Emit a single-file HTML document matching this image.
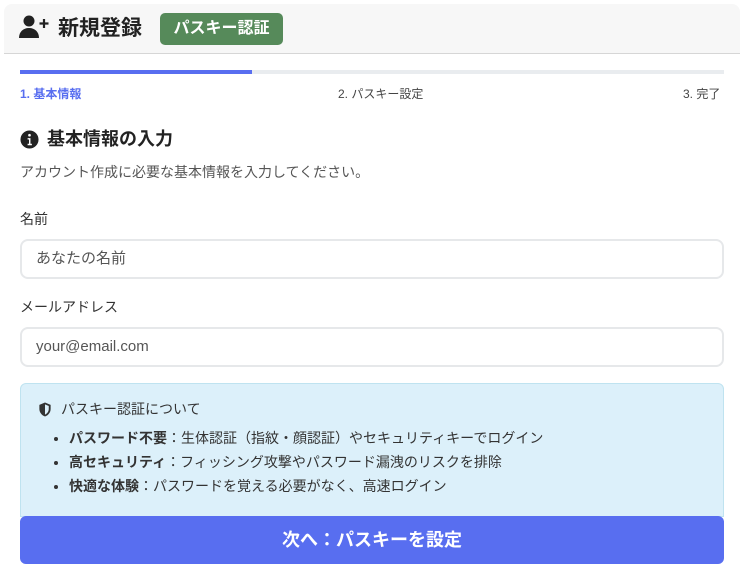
<!DOCTYPE html>
<html><head><meta charset="utf-8"><style>
*{box-sizing:border-box;margin:0;padding:0}
body{width:744px;height:576px;background:#fff;font-family:"Liberation Sans","Noto Sans CJK JP",sans-serif;color:#212529;overflow:hidden;position:relative}
.hdr{position:absolute;left:4px;top:4px;width:736px;height:50px;background:#f7f7f7;border-bottom:1px solid #d6d6d6;border-radius:8px 8px 0 0}
.abs{position:absolute}
.badge{position:absolute;left:160px;top:13px;width:123px;height:32px;background:#568a5a;border-radius:5px;color:#fff;font-weight:bold;font-size:16px;line-height:32px;text-align:center}
.input{position:absolute;left:20px;width:704px;height:40px;border:2px solid #e6e8ea;border-radius:8px;font-size:15px;color:#555;padding-left:14px;line-height:36px}
.info{position:absolute;left:20px;top:383px;width:704px;height:134px;background:#dcf0fa;border:1px solid #bfe3f0;border-radius:6px 6px 0 0}
.info li{font-size:14px;color:#333;height:24px;line-height:24px}
.btn{position:absolute;left:20px;top:516px;width:704px;height:48px;background:#586ef0;border-radius:6px;color:#fff;font-weight:bold;font-size:18px;text-align:center;line-height:48px}
</style></head><body>
<div class="hdr"></div>
<svg class="abs" style="left:19px;top:15px" width="32" height="24" viewBox="0 0 32 24"><circle cx="10" cy="6" r="5.5" fill="#222"/><path d="M0 23c0-6 4-10 10-10s10 4 10 10z" fill="#222"/><path d="M25 4v9M20.5 8.5h9" stroke="#222" stroke-width="2.2"/></svg>
<div class="abs" style="left:58px;top:15px;font-size:21px;font-weight:bold;color:#222;line-height:28px">新規登録</div>
<div class="badge">パスキー認証</div>
<div class="abs" style="left:20px;top:70px;width:704px;height:4px;background:#e9ecef"></div>
<div class="abs" style="left:20px;top:70px;width:232px;height:4px;background:#586ef0"></div>
<div class="abs" style="left:20px;top:85px;font-size:12px;font-weight:bold;color:#586ef0">1. 基本情報</div>
<div class="abs" style="left:338px;top:85px;font-size:12px;color:#444">2. パスキー設定</div>
<div class="abs" style="left:683px;top:85px;font-size:12px;color:#444">3. 完了</div>
<svg class="abs" style="left:20px;top:130px" width="19" height="19" viewBox="0 0 20 20"><circle cx="10" cy="10" r="9.5" fill="#222"/><circle cx="10" cy="5.5" r="1.4" fill="#fff"/><path d="M8 8.5h3v6h1.5v1.5h-4.5v-1.5h1.5v-4.5h-1.5z" fill="#fff"/></svg>
<div class="abs" style="left:47px;top:127px;font-size:18px;font-weight:bold;color:#222;line-height:24px">基本情報の入力</div>
<div class="abs" style="left:20px;top:162px;font-size:14px;color:#555;line-height:20px">アカウント作成に必要な基本情報を入力してください。</div>
<div class="abs" style="left:20px;top:209px;font-size:14px;color:#333;line-height:20px">名前</div>
<div class="input" style="top:239px">あなたの名前</div>
<div class="abs" style="left:20px;top:297px;font-size:14px;color:#333;line-height:20px">メールアドレス</div>
<div class="input" style="top:327px">your@email.com</div>
<div class="info">
<svg class="abs" style="left:17px;top:18px" width="14" height="15" viewBox="0 0 14 16"><path d="M7 0.5L13 3v4.5c0 4-3 7-6 8-3-1-6-4-6-8V3z" fill="#333"/><path d="M7 2.5v11c2-1 4-3 4-6V4.3z" fill="#dcf0fa"/></svg>
<div class="abs" style="left:40px;top:15px;font-size:14px;color:#333;line-height:20px">パスキー認証について</div>
<ul style="position:absolute;left:48px;top:42px">
<li><b>パスワード不要</b>：生体認証（指紋・顔認証）やセキュリティキーでログイン</li>
<li><b>高セキュリティ</b>：フィッシング攻撃やパスワード漏洩のリスクを排除</li>
<li><b>快適な体験</b>：パスワードを覚える必要がなく、高速ログイン</li>
</ul>
</div>
<div class="btn">次へ：パスキーを設定</div>
</body></html>
